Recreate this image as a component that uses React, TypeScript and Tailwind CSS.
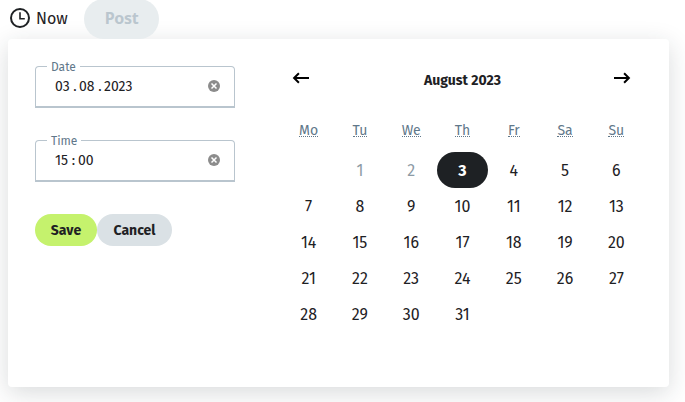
import React from "react";

const weekdays = ["Mo", "Tu", "We", "Th", "Fr", "Sa", "Su"];
const days: (number | null)[] = [null, ...Array.from({ length: 31 }, (_, i) => i + 1)];

function ClearIcon() {
  return (
    <svg width="12" height="12" viewBox="0 0 12 12" className="shrink-0">
      <circle cx="6" cy="6" r="6" fill="#8c8c8c" />
      <path d="M3.5 3.5 8.5 8.5M8.5 3.5 3.5 8.5" stroke="#fff" strokeWidth="1.5" />
    </svg>
  );
}

function Field({ label, children }: { label: string; children: React.ReactNode }) {
  return (
    <fieldset className="h-[50px] w-[200px] rounded-t-[4px] border border-b-2 border-[#b9c5ce] pl-[19px] pr-[14px]">
      <legend className="-ml-[8px] h-4 px-1 pt-px text-[12px] leading-4 text-[#61788a]">{label}</legend>
      <div className="flex h-[24px] items-center justify-between text-[14px] leading-5 text-[#1e2124]">
        {children}
        <ClearIcon />
      </div>
    </fieldset>
  );
}

function Arrow({ flip }: { flip?: boolean }) {
  return (
    <svg width="18" height="14" viewBox="0 0 18 14" className={flip ? "-scale-x-100" : ""}>
      <path d="M2.1 7H17M6.9 2.2 2.1 7l4.8 4.8" fill="none" stroke="#000" strokeWidth="2" />
    </svg>
  );
}

export default function App() {
  return (
    <div className="h-[402px] w-[685px] overflow-hidden bg-white font-['Fira_Sans','Noto_Sans',sans-serif] text-[#1e2124]">
      <div className="flex h-[39px] items-start pl-[10px]">
        <svg width="20" height="20" viewBox="0 0 20 20" className="mt-[8px]" fill="none" stroke="#1e2124">
          <circle cx="10" cy="10" r="9" strokeWidth="2" />
          <path d="M10 4.2V10.7H14.8" strokeWidth="1.6" />
        </svg>
        <span className="ml-[6px] mt-[7px] w-[48px] text-[16px] leading-6">Now</span>
        <div className="-mt-[1px] flex h-[40px] w-[75px] items-center justify-center rounded-full bg-[#e8edef] font-['Noto_Sans',sans-serif] text-[16px] font-bold text-[#bac6ce]">
          <span className="-mt-[2px] tracking-[-0.3px]">Post</span>
        </div>
      </div>
      <div className="ml-[8px] flex h-[348px] w-[661px] rounded-[4px] bg-white pl-[27px] shadow-[0_6px_24px_rgba(30,41,50,0.17)]">
        <div className="w-[200px] pt-[19px]">
          <Field label="Date">
            <div className="flex pt-px">
              <span className="w-[16px]">03</span>
              <span className="w-[8px] text-center">.</span>
              <span className="w-[17px]">08</span>
              <span className="w-[8px] text-center">.</span>
              <span>2023</span>
            </div>
          </Field>
          <div className="mt-[24px]">
            <Field label="Time">
              <div className="flex pt-px">
                <span className="w-[14px]">15</span>
                <span className="w-[9px] text-center">:</span>
                <span>00</span>
              </div>
            </Field>
          </div>
          <div className="mt-[32px] flex text-[14px] font-bold leading-5">
            <button className="flex h-[32px] w-[62px] items-center justify-center rounded-full bg-[#c5f26d]">
              <span className="pt-px">Save</span>
            </button>
            <button className="flex h-[32px] w-[75px] items-center justify-center rounded-full bg-[#dae1e5]">
              <span className="pt-px">Cancel</span>
            </button>
          </div>
        </div>
        <div className="ml-[48px] w-[359px] pt-[31px]">
          <div className="flex h-[20px] items-start justify-between pl-[9px] pr-[11px]">
            <div className="mt-[1px]"><Arrow /></div>
            <span className="mt-[1px] pl-[2px] text-[14px] font-bold leading-5">August 2023</span>
            <div className="mt-[1px]"><Arrow flip /></div>
          </div>
          <div className="mt-[31px] grid grid-cols-7 text-center text-[14px] leading-5 text-[#61788a]">
            {weekdays.map((d) => (
              <span key={d}>
                <span className="inline-block h-[16px] border-b border-dotted border-[#61788a] align-top">{d}</span>
              </span>
            ))}
          </div>
          <div className="mt-[11px] grid grid-cols-7 text-[16px]">
            {days.map((d, i) => (
              <div
                key={i}
                className={`flex h-[36px] items-center justify-center rounded-full pt-px ${
                  d === 3 ? "bg-[#1e2124] font-bold text-white" : d === 1 || d === 2 ? "text-[#8d9ba5]" : ""
                }`}
              >
                {d}
              </div>
            ))}
          </div>
        </div>
      </div>
    </div>
  );
}
